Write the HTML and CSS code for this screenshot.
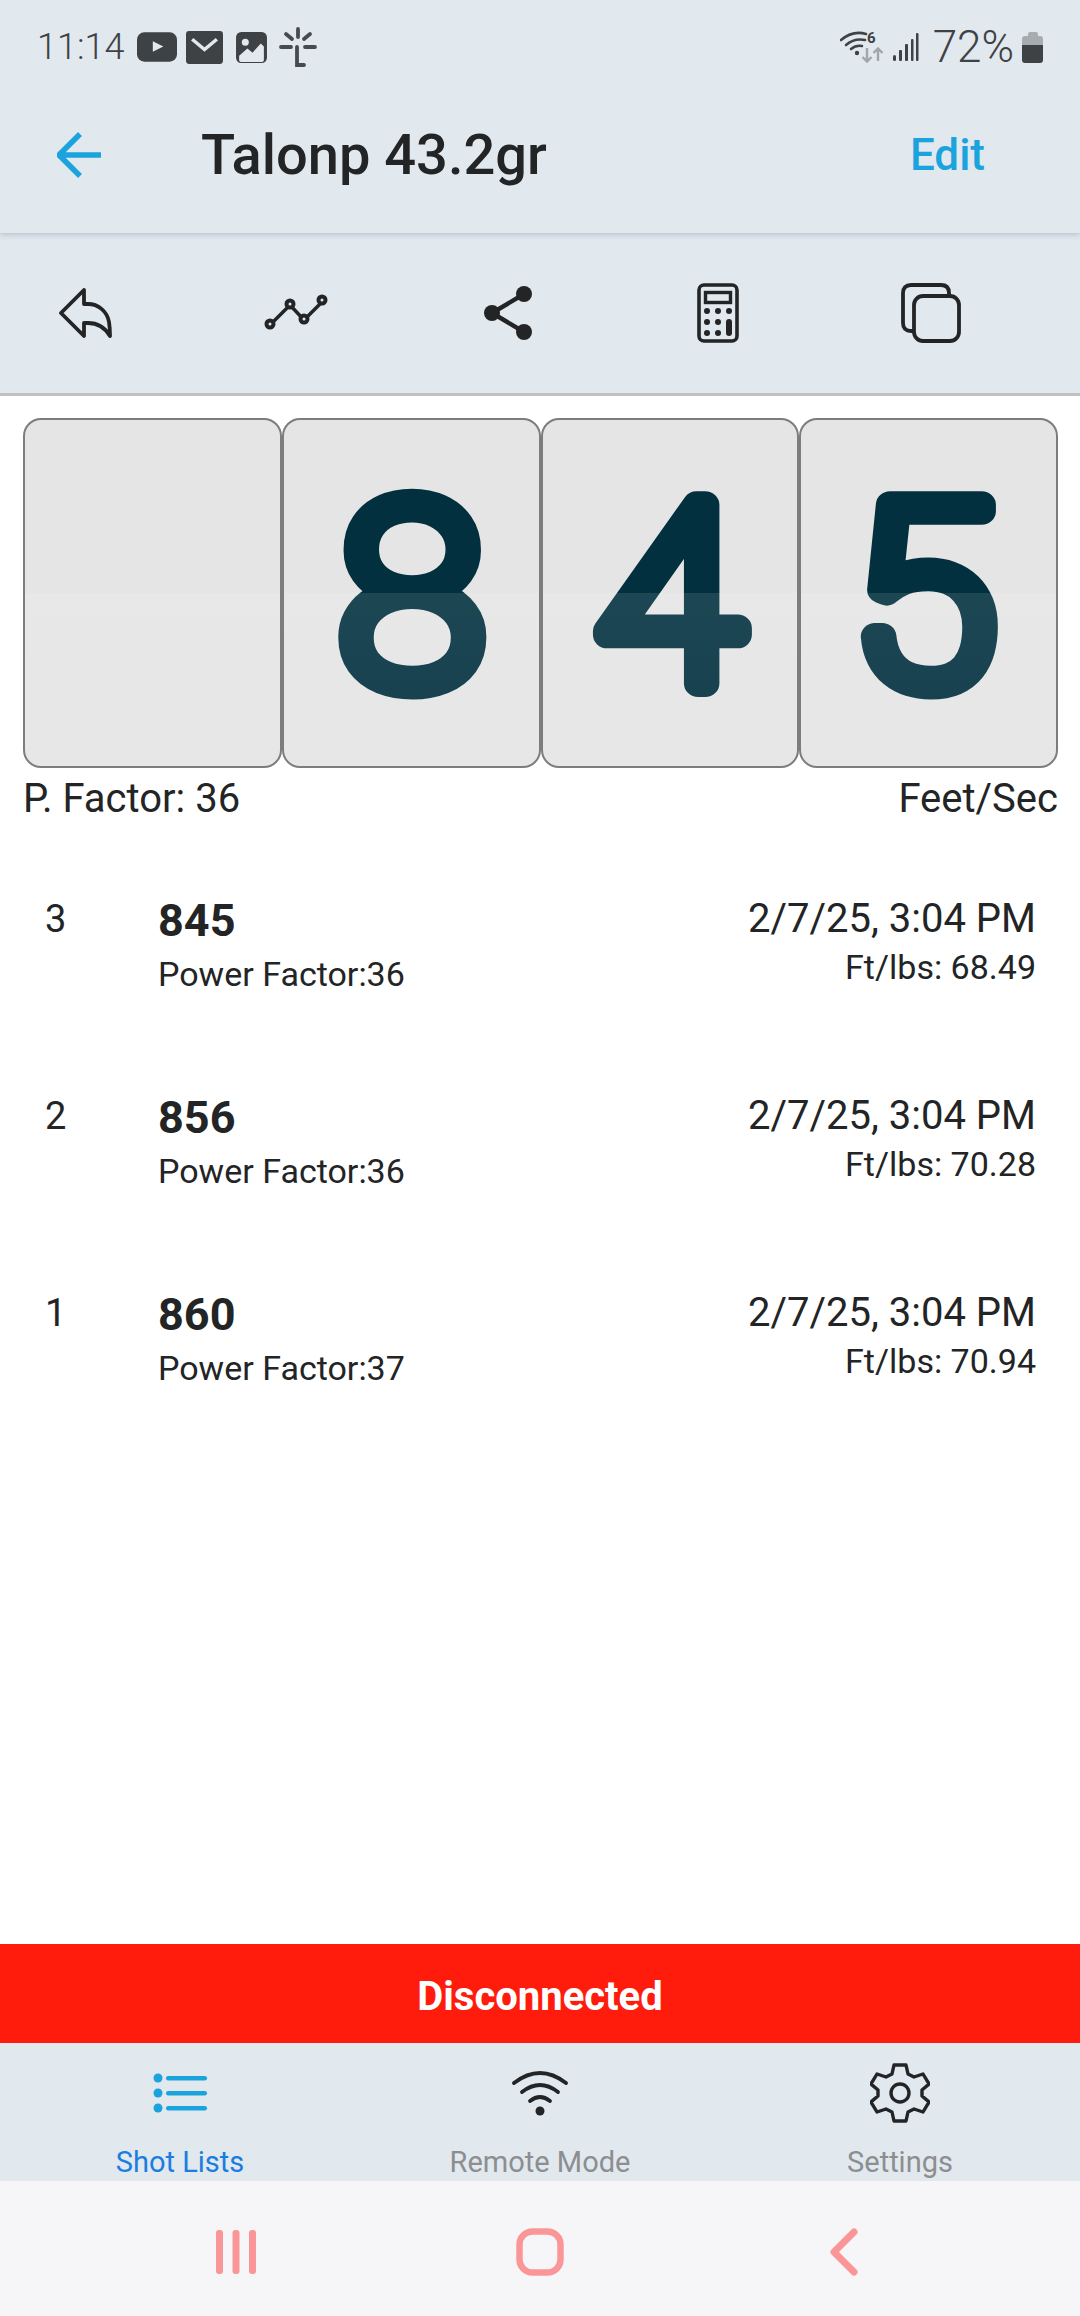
FILE: index.html
```html
<!DOCTYPE html>
<html lang="en">
<head>
    <meta charset="UTF-8">
    <meta name="viewport" content="width=device-width, initial-scale=1.0">
    <title>Talonp 43.2gr</title>
    <link rel="stylesheet" href="styles.css">
</head>
<body>
    <div class="page">
        <header class="top">
            <div class="status-bar">
                <div class="status-left">
                    <span class="clock">11:14</span>
                    <svg class="ico-yt" viewBox="0 0 38 30"><rect x="0" y="1" width="38" height="28" rx="7" fill="#3f4245"/><path d="M15 9.500v10l10-5z" fill="#e1e8ee"/></svg>
                    <svg class="ico-mail" viewBox="0 0 36 32"><rect width="36" height="32" rx="3" fill="#3f4245"/><path d="M6 8l12 10L30 8" fill="none" stroke="#e1e8ee" stroke-width="3.400"/></svg>
                    <svg class="ico-pic" viewBox="0 0 32 32"><rect x="1" y="1" width="30" height="30" rx="5" fill="#3f4245"/><circle cx="10" cy="11" r="3.400" fill="#e1e8ee"/><path d="M4 24l8-7 5 4 8-9 3 3v13q0 2-3 2H7q-3 0-3-2z" fill="#e1e8ee"/></svg>
                    <svg class="ico-spark" viewBox="0 0 38 40"><g fill="none" stroke="#484b4e" stroke-width="3.800" stroke-linecap="round"><path d="M19 2v8M7 7l6 5M31 7l-6 5M2 20h10M26 20h10M18 20v18h7"/></g></svg>
                </div>
                <div class="status-right">
                    <svg class="ico-wifi6" viewBox="0 0 44 34"><g fill="none" stroke="#3f4245" stroke-width="2.600" stroke-linecap="round"><path d="M1 10Q13 0 26 4"/><path d="M6 15Q14 8 25 10"/><path d="M11 19Q16 15 22 16"/></g><circle cx="17" cy="23" r="2.200" fill="#3f4245"/><g fill="none" stroke="#a3a6a9" stroke-width="2.400"><path d="M27 18v13M22.500 27l4.500 4.500 4.500-4.500"/></g><g fill="none" stroke="#a3a6a9" stroke-width="2.400"><path d="M38 31V18M33.500 23l4.500-4.500 4.500 4.500"/></g><text x="27" y="13" class="wifi-six">6</text></svg>
                    <svg class="ico-signal" viewBox="0 0 26 30"><g fill="#3f4245"><rect x="0" y="23" width="3" height="6" rx="1.500"/><rect x="6" y="18" width="3" height="11" rx="1"/><rect x="12" y="12" width="3" height="17" rx="1"/><rect x="18" y="7" width="2.500" height="22" rx="1"/><rect x="23" y="1" width="2.500" height="28" rx="1"/></g></svg>
                    <span class="battery-text">72%</span>
                    <div class="battery"><div class="battery-cap"></div><div class="battery-body"></div></div>
                </div>
            </div>
            <div class="title-bar">
                <svg class="back-arrow" viewBox="0 0 44 46"><path d="M44 23H4M23 2L2 23l21 21" fill="none" stroke="#1ba3dd" stroke-width="5.500"/></svg>
                <h1 class="title">Talonp 43.2gr</h1>
                <span class="edit">Edit</span>
            </div>
        </header>

        <nav class="toolbar">
            <svg class="tool-reply" viewBox="0 0 56 50"><path d="M26 2L3 25l23 23V35h4c8 0 16 3 22 13 0-6 0-8-1-14-2-11-11-18-21-18h-4z" fill="none" stroke="#232425" stroke-width="3.800" stroke-linejoin="round"/></svg>
            <svg class="tool-chart" viewBox="0 0 64 40"><path d="M6 33l20-20 14 15 20-20" fill="none" stroke="#232425" stroke-width="3.500"/><g fill="#e1e8ee" stroke="#232425" stroke-width="4"><circle cx="6" cy="32" r="3.500"/><circle cx="26" cy="12" r="3.500"/><circle cx="40" cy="27" r="3.500"/><circle cx="58" cy="8" r="3.500"/></g></svg>
            <svg class="tool-share" viewBox="0 0 50 56"><path d="M41 9L9 28l32 19" fill="none" stroke="#232425" stroke-width="4.500"/><g fill="#232425"><circle cx="41" cy="9" r="8"/><circle cx="9" cy="28" r="8"/><circle cx="41" cy="47" r="8"/></g></svg>
            <svg class="tool-calc" viewBox="0 0 42 60"><rect x="2" y="2" width="38" height="56" rx="5" fill="none" stroke="#232425" stroke-width="3.600"/><rect x="8.500" y="9.500" width="25" height="10" fill="none" stroke="#232425" stroke-width="3.400"/><g fill="#232425"><circle cx="10" cy="28" r="3"/><circle cx="21" cy="28" r="3"/><circle cx="32" cy="28" r="3"/><circle cx="10" cy="39" r="3"/><circle cx="21" cy="39" r="3"/><circle cx="10" cy="50" r="3"/><circle cx="21" cy="50" r="3"/><rect x="29" y="36" width="6" height="17" rx="3"/></g></svg>
            <svg class="tool-copy" viewBox="0 0 60 60"><path d="M13 48H10q-8 0-8-8V10q0-8 8-8h30q8 0 8 8v2" fill="none" stroke="#232425" stroke-width="3.800"/><rect x="13" y="13" width="45" height="45" rx="9" fill="none" stroke="#232425" stroke-width="3.800"/></svg>
        </nav>

        <main class="content">
            <div class="display">
                <div class="digit"></div>
                <div class="digit"><svg class="digit-svg" viewBox="0 0 253 344"><text x="127" y="262">8</text></svg></div>
                <div class="digit"><svg class="digit-svg" viewBox="0 0 253 344"><text x="125" y="262">4</text></svg></div>
                <div class="digit"><svg class="digit-svg" viewBox="0 0 253 344"><text x="122" y="262">5</text></svg></div>
            </div>
            <div class="display-labels">
                <span>P. Factor: 36</span>
                <span>Feet/Sec</span>
            </div>

            <ul class="shots">
                <li class="shot">
                    <span class="shot-num">3</span>
                    <div class="shot-main">
                        <div class="shot-speed">845</div>
                        <div class="shot-sub">Power Factor:36</div>
                    </div>
                    <div class="shot-right">
                        <div class="shot-date">2/7/25, 3:04 PM</div>
                        <div class="shot-sub">Ft/lbs: 68.49</div>
                    </div>
                </li>
                <li class="shot">
                    <span class="shot-num">2</span>
                    <div class="shot-main">
                        <div class="shot-speed">856</div>
                        <div class="shot-sub">Power Factor:36</div>
                    </div>
                    <div class="shot-right">
                        <div class="shot-date">2/7/25, 3:04 PM</div>
                        <div class="shot-sub">Ft/lbs: 70.28</div>
                    </div>
                </li>
                <li class="shot">
                    <span class="shot-num">1</span>
                    <div class="shot-main">
                        <div class="shot-speed">860</div>
                        <div class="shot-sub">Power Factor:37</div>
                    </div>
                    <div class="shot-right">
                        <div class="shot-date">2/7/25, 3:04 PM</div>
                        <div class="shot-sub">Ft/lbs: 70.94</div>
                    </div>
                </li>
            </ul>
        </main>

        <div class="banner">Disconnected</div>

        <nav class="tabs">
            <div class="tab active">
                <svg class="tab-ico" viewBox="0 0 60 60"><g fill="#1ba3dd"><circle cx="8" cy="15" r="4.500"/><circle cx="8" cy="30" r="4.500"/><circle cx="8" cy="45" r="4.500"/><rect x="16" y="13" width="41" height="4.400" rx="2.200"/><rect x="16" y="28" width="41" height="4.400" rx="2.200"/><rect x="16" y="43" width="41" height="4.400" rx="2.200"/></g></svg>
                <span class="tab-label">Shot Lists</span>
            </div>
            <div class="tab">
                <svg class="tab-ico" viewBox="0 0 60 60"><g fill="none" stroke="#232425" stroke-width="3.800" stroke-linecap="round"><path d="M4 20q26-20 52 0"/><path d="M12 29q18-14 36 0"/><path d="M20 38q10-8 20 0"/></g><circle cx="30" cy="48" r="4.500" fill="#232425"/></svg>
                <span class="tab-label">Remote Mode</span>
            </div>
            <div class="tab">
                <svg class="tab-ico" viewBox="0 0 60 60"><path d="M24 2h12l2 9 6 3 9-3 6 10-7 6v6l7 6-6 10-9-3-6 3-2 9H24l-2-9-6-3-9 3-6-10 7-6v-6l-7-6 6-10 9 3 6-3z" fill="none" stroke="#232425" stroke-width="3.400" stroke-linejoin="round"/><circle cx="30" cy="30" r="9" fill="none" stroke="#232425" stroke-width="3.400"/></svg>
                <span class="tab-label">Settings</span>
            </div>
        </nav>

        <div class="android-nav">
            <svg class="nav-recents" viewBox="0 0 42 46"><g fill="#fa9698"><rect x="1" y="1" width="7" height="44" rx="3"/><rect x="17.500" y="1" width="7" height="44" rx="3"/><rect x="34" y="1" width="7" height="44" rx="3"/></g></svg>
            <svg class="nav-home" viewBox="0 0 48 48"><rect x="3.500" y="3.500" width="41" height="41" rx="13" fill="none" stroke="#fa9698" stroke-width="6.500"/></svg>
            <svg class="nav-back" viewBox="0 0 30 48"><path d="M25 4L5 24l20 20" fill="none" stroke="#fa9698" stroke-width="7" stroke-linecap="round" stroke-linejoin="round"/></svg>
        </div>
    </div>
</body>
</html>
```

FILE: styles.css
```css
* {
    box-sizing: border-box;
}

body {
    margin: 0;
    font-family: Roboto, sans-serif;
    color: #232425;
    background: #fff;
}

.page {
    width: 1080px;
    height: 2316px;
    display: flex;
    flex-direction: column;
    overflow: hidden;
}

/* header */
.top {
    height: 233px;
    background: #e1e8ee;
    position: relative;
    z-index: 2;
    box-shadow: 0 1px 6px rgba(70, 70, 100, 0.3);
}

.status-bar {
    height: 94px;
    padding: 0 37px 0 37px;
    display: flex;
    justify-content: space-between;
    align-items: center;
}

.status-left,
.status-right {
    display: flex;
    align-items: center;
}

.clock {
    font-size: 36px;
    font-weight: 300;
    color: #3f4245;
    margin-right: 13px;
}

.ico-yt { width: 40px; height: 32px; margin-right: 9px; }
.ico-mail { width: 37px; height: 33px; margin-right: 12px; }
.ico-pic { width: 33px; height: 33px; margin-right: 11px; }
.ico-spark { width: 38px; height: 40px; }
.ico-wifi6 { width: 44px; height: 34px; margin-right: 9px; }
.ico-signal { width: 26px; height: 30px; margin-right: 14px; }

.wifi-six {
    font-size: 15px;
    font-weight: 700;
    fill: #3f4245;
}

.battery-text {
    font-size: 44px;
    font-weight: 300;
    color: #3f4245;
    margin-right: 8px;
}

.battery {
    width: 21px;
    display: flex;
    flex-direction: column;
    align-items: center;
}

.battery-cap {
    width: 10px;
    height: 4px;
    background: #a9acaf;
    border-radius: 2px 2px 0 0;
}

.battery-body {
    width: 21px;
    height: 27px;
    border-radius: 3px;
    background: linear-gradient(#a9acaf 0 9px, #3f4245 9px);
}

.title-bar {
    height: 139px;
    display: flex;
    align-items: center;
    padding: 0 95px 18px 57px;
}

.back-arrow {
    width: 44px;
    height: 46px;
    margin-right: 100px;
}

.title {
    margin: 0;
    flex: 1;
    font-size: 56px;
    font-weight: 500;
}

.edit {
    font-size: 44px;
    font-weight: 500;
    color: #1ba3dd;
}

/* icon row */
.toolbar {
    height: 163px;
    background: #e1e8ee;
    border-bottom: 3px solid #c0c1c4;
    display: flex;
    align-items: center;
    padding-left: 58px;
}

.tool-reply { width: 56px; height: 50px; }
.tool-chart { width: 64px; height: 40px; margin: -2px 0 0 150px; }
.tool-share { width: 50px; height: 56px; margin-left: 155px; }
.tool-calc { width: 42px; height: 60px; margin-left: 164px; }
.tool-copy { width: 60px; height: 60px; margin-left: 162px; }

/* big readout */
.content {
    flex: 1;
    padding: 22px 22px 0 23px;
}

.display {
    display: flex;
    gap: 0;
}

.digit {
    flex: 1;
    height: 350px;
    border: 2.500px solid #7d7d7d;
    border-radius: 18px;
    background: #e5e5e5;
    position: relative;
    overflow: hidden;
}

/* lighter lower half, sits over the digit too */
.digit::after {
    content: "";
    position: absolute;
    left: 0;
    right: 0;
    top: 50%;
    bottom: 0;
    background: linear-gradient(rgba(255, 255, 255, 0.11), rgba(255, 255, 255, 0.07));
}

.digit-svg {
    display: block;
    width: 100%;
    height: 100%;
}

.digit-svg text {
    font-family: Roboto, sans-serif;
    font-size: 250px;
    font-weight: 100;
    text-anchor: middle;
    fill: #02303f;
    stroke: #02303f;
    stroke-width: 27px;
    stroke-linejoin: round;
    transform: scaleX(1.05);
    transform-box: fill-box;
    transform-origin: center;
}

.display-labels {
    display: flex;
    justify-content: space-between;
    font-size: 40px;
    line-height: 44px;
    margin-top: 9px;
}

.shots {
    list-style: none;
    margin: 35px 0 0;
    padding: 0 22px 0 22px;
}

.shot {
    height: 197px;
    display: flex;
    padding-top: 41px;
}

.shot-num {
    width: 113px;
    font-size: 38px;
    line-height: 44px;
}

.shot-main {
    flex: 1;
}

.shot-speed {
    font-size: 45px;
    font-weight: 700;
    line-height: 48px;
}

.shot-sub {
    font-size: 34px;
    line-height: 40px;
    margin-top: 9px;
}

.shot-right {
    text-align: right;
}

.shot-date {
    font-size: 40px;
    line-height: 44px;
}

.shot-right .shot-sub {
    margin-top: 6px;
}

/* bottom */
.banner {
    height: 99px;
    background: #ff1c0c;
    color: #fff;
    font-size: 40px;
    font-weight: 700;
    display: flex;
    justify-content: center;
    align-items: center;
    padding-top: 5px;
}

.tabs {
    height: 138px;
    background: #e1e8ee;
    display: flex;
}

.tab {
    flex: 1;
    display: flex;
    flex-direction: column;
    align-items: center;
    padding-top: 20px;
}

.tab-ico {
    width: 60px;
    height: 60px;
}

.tab-label {
    font-size: 29px;
    line-height: 34px;
    margin-top: 22px;
    color: #8c8e90;
}

.tab.active .tab-label {
    color: #1a7de0;
}

.android-nav {
    height: 135px;
    background: #f6f6f9;
    display: grid;
    grid-template-columns: repeat(3, 1fr);
    justify-items: center;
    align-items: center;
}

.nav-recents { width: 42px; height: 46px; margin: 6px 0 0 112px; }
.nav-home { width: 48px; height: 48px; margin-top: 6px; }
.nav-back { width: 30px; height: 48px; margin: 6px 112px 0 0; }
```
